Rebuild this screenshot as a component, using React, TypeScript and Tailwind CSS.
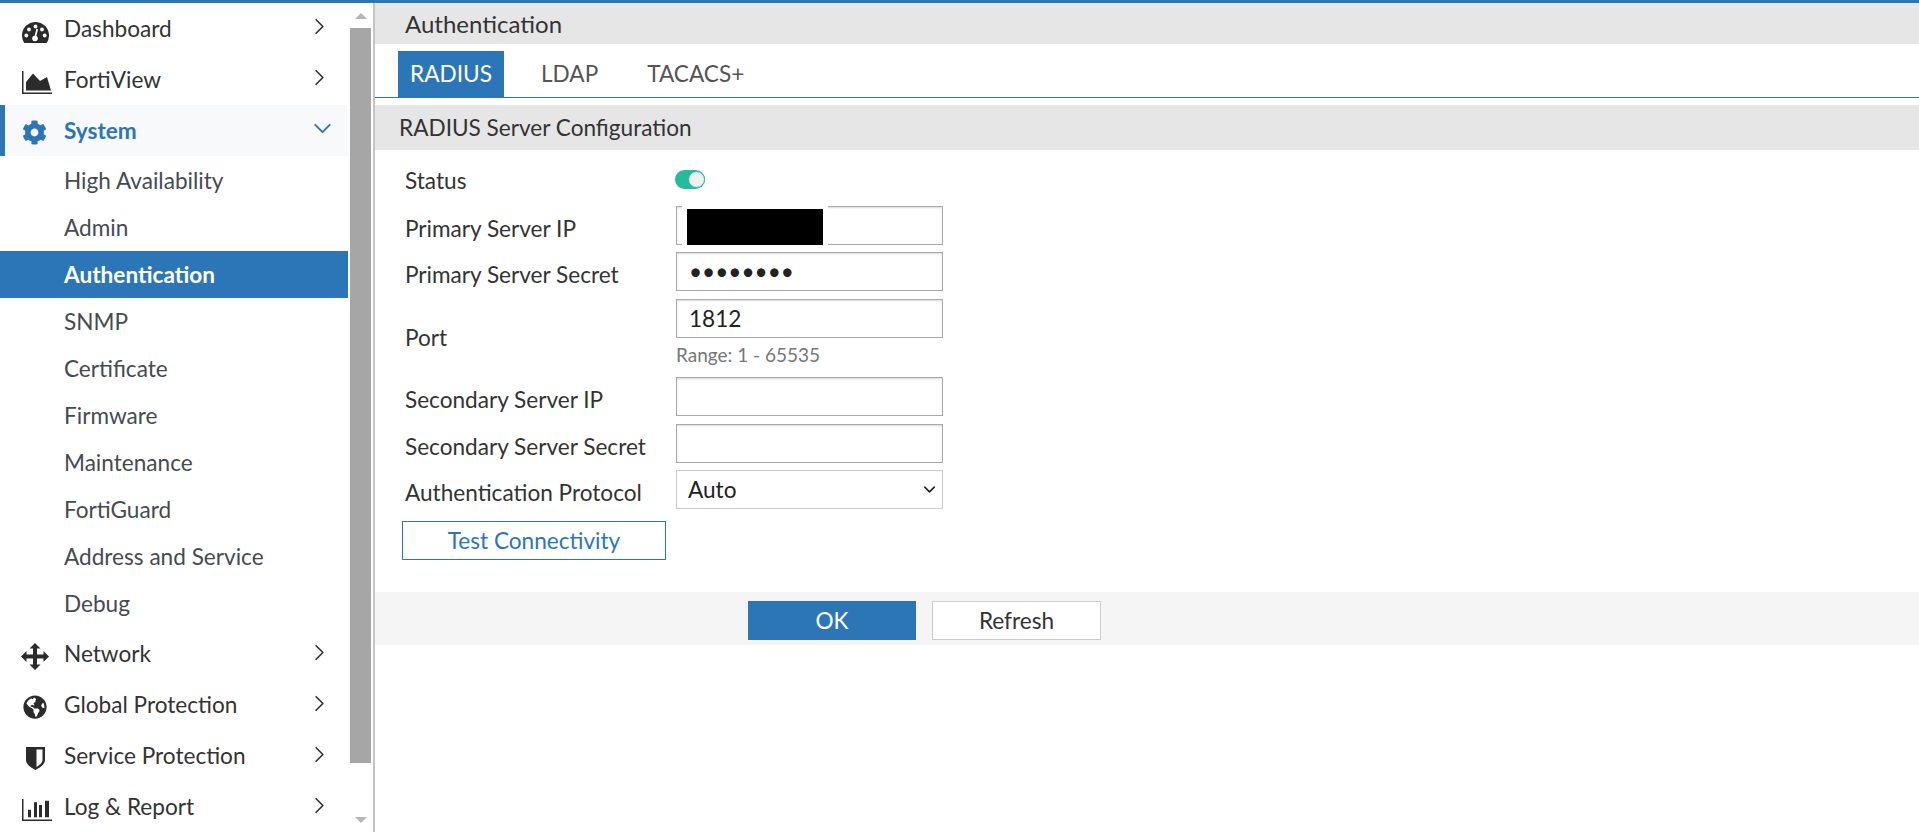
import { ChevronDown, ChevronRight } from 'lucide-react';
import { FaCog, FaGlobeAmericas } from 'react-icons/fa';
import type { ReactNode } from 'react';

const subItems = [
  'High Availability',
  'Admin',
  'Authentication',
  'SNMP',
  'Certificate',
  'Firmware',
  'Maintenance',
  'FortiGuard',
  'Address and Service',
  'Debug',
];

function DashboardIcon() {
  return (
    <svg viewBox="0 0 27 21" className="mt-[7px] h-[21px] w-[27px]">
      <path d="M2.3 21A13.5 13.5 0 1 1 24.7 21Z" fill="#2b2b2b" />
      <circle cx="13.5" cy="4.5" r="1.9" fill="white" />
      <circle cx="7" cy="7.5" r="1.9" fill="white" />
      <circle cx="20" cy="7.5" r="1.9" fill="white" />
      <circle cx="4.3" cy="13.5" r="1.9" fill="white" />
      <circle cx="22.7" cy="13.5" r="1.9" fill="white" />
      <circle cx="13" cy="16.5" r="2.8" fill="white" />
      <path d="M13 16L15.2 7" stroke="white" strokeWidth="1.7" />
    </svg>
  );
}

function AreaIcon() {
  return (
    <svg viewBox="0 0 30 23" className="mt-[5px] ml-[4px] h-[23px] w-[30px]">
      <path d="M0.75 0V22.25H30" fill="none" stroke="#2b2b2b" strokeWidth="1.5" />
      <path d="M4 19.5V11L11 2.5L18 10L25 6L29 19.5Z" fill="#2b2b2b" />
    </svg>
  );
}

function ArrowsIcon() {
  return (
    <svg viewBox="0 0 28 27" className="mt-[3px] h-[27px] w-[28px]">
      <path
        d="M14 0L19.5 5.5H16V11.5H22.5V8L28 13.5L22.5 19V15.5H16V21.5H19.5L14 27L8.5 21.5H12V15.5H5.5V19L0 13.5L5.5 8V11.5H12V5.5H8.5Z"
        fill="#2b2b2b"
      />
    </svg>
  );
}

function ShieldIcon() {
  return (
    <svg viewBox="0 0 19 23" className="mt-[3px] h-[23px] w-[19px]">
      <path d="M0 0H19V13C19 18 13 21 9.5 23C6 21 0 18 0 13Z" fill="#2b2b2b" />
      <path d="M10.5 2.5H16.5V13C16.5 16 13 18.5 10.5 20Z" fill="white" />
    </svg>
  );
}

function BarsIcon() {
  return (
    <svg viewBox="0 0 30 22" className="mt-[5px] ml-[4px] h-[22px] w-[30px]">
      <path d="M0.75 0V21.25H30" fill="none" stroke="#2b2b2b" strokeWidth="1.5" />
      <path d="M6 10.7H9V18.3H6ZM12 3.3H15V18.3H12ZM17 6H20V18.3H17ZM23 1.7H27V18.3H23Z" fill="#2b2b2b" />
    </svg>
  );
}

function TopItem({ icon, label, labelClass = 'pb-[1px]' }: { icon: ReactNode; label: string; labelClass?: string }) {
  return (
    <div className="relative flex h-[51px] items-center text-[#333]">
      <span className="flex w-[64px] shrink-0 justify-center pl-[6px] text-[#2b2b2b]">{icon}</span>
      <span className={`text-[22.6px] ${labelClass}`}>{label}</span>
      <ChevronRight className="absolute top-[10px] left-[306px] h-[27px] w-[27px] stroke-[1.5]" />
    </div>
  );
}

function Sidebar() {
  return (
    <div className="flex h-full w-[375px] shrink-0 border-r-2 border-[#c4c4c4]">
      <nav className="w-[348px] shrink-0">
        <TopItem icon={<DashboardIcon />} label="Dashboard" labelClass="pt-[1px]" />
        <TopItem icon={<AreaIcon />} label="FortiView" labelClass="pt-[1px]" />
        <div className="relative flex h-[51px] items-center border-l-[5px] border-[#2c76b8] bg-[#f8f9fa] font-bold text-[#2c76b8]">
          <span className="flex w-[59px] shrink-0 pl-[17px]"><FaCog size={25} className="mt-[4px]" /></span>
          <span className="text-[22.6px]">System</span>
          <ChevronDown className="absolute top-[9px] left-[303px] h-[29px] w-[29px] stroke-[1.6]" />
        </div>
        <div className="pt-[1px] pb-[2px]">
          {subItems.map((item) => (
            <div
              key={item}
              className={
                item === 'Authentication'
                  ? 'flex h-[47px] items-center bg-[#2c76b8] pl-[64px] text-[22.6px] font-bold text-white'
                  : 'flex h-[47px] items-center pl-[64px] text-[22.6px] text-[#454b52]'
              }
            >
              {item}
            </div>
          ))}
        </div>
        <TopItem icon={<ArrowsIcon />} label="Network" />
        <TopItem icon={<FaGlobeAmericas size={24} className="mt-[2px]" />} label="Global Protection" />
        <TopItem icon={<ShieldIcon />} label="Service Protection" />
        <TopItem icon={<BarsIcon />} label="Log & Report" />
      </nav>
      <div className="ml-[2px] flex w-[21px] shrink-0 flex-col items-center">
        <div className="mt-[10px] h-0 w-0 border-x-[6px] border-b-[6px] border-x-transparent border-b-[#b5b5b5]" />
        <div className="mt-[9px] h-[735px] w-full bg-[#a6a6a6]" />
        <div className="mt-[54px] h-0 w-0 border-x-[6px] border-t-[6px] border-x-transparent border-t-[#b5b5b5]" />
      </div>
    </div>
  );
}

const inputClass =
  'h-[39px] w-[267px] border border-[#aaaaaa] bg-white px-[12px] text-[22.6px] text-[#222] shadow-[inset_0_1px_2px_rgba(0,0,0,0.15)] outline-none';

function Row({ label, className, children }: { label: string; className: string; children: ReactNode }) {
  return (
    <div className={`flex items-center ${className}`}>
      <label className="w-[271px] shrink-0 pt-[6px] text-[22.6px] leading-[30px] text-[#333]">{label}</label>
      {children}
    </div>
  );
}

function Main() {
  return (
    <main className="flex-1">
      <div className="flex h-[41px] items-center bg-[#e6e6e6] pl-[30px] text-[24px] text-[#333]">Authentication</div>

      <div className="mt-[7px] flex h-[47px] items-stretch gap-[37px] border-b border-[#2c76b8] pl-[23px] text-[22.6px] text-[#555]">
        <div className="flex w-[106px] items-center justify-center bg-[#2c76b8] text-white">RADIUS</div>
        <div className="flex items-center">LDAP</div>
        <div className="ml-[12px] flex items-center">TACACS+</div>
      </div>

      <div className="mt-[7px] flex h-[45px] items-center bg-[#e6e6e6] pl-[24px] text-[22.6px] text-[#333]">
        RADIUS Server Configuration
      </div>

      <div className="pl-[30px]">
        <div className="mt-[16px] flex h-[32px] items-center">
          <span className="w-[270px] shrink-0 pb-[2px] text-[22.6px] leading-[30px] text-[#333]">Status</span>
          <span className="relative -mt-[5px] h-[19px] w-[30px] rounded-full bg-[#26bb9c]">
            <span className="absolute top-[1px] right-0 h-[17px] w-[17px] rounded-full border border-[#26bb9c] bg-[#f0f0f0]" />
          </span>
        </div>

        <Row label="Primary Server IP" className="mt-[8px]">
          <div className="relative">
            <input className={inputClass} readOnly />
            {/* Redacted value */}
            <div className="absolute top-0 bottom-0 left-[6px] w-[146px] bg-white">
              <div className="mt-[3px] ml-[5px] h-[36px] w-[136px] bg-black" />
            </div>
          </div>
        </Row>
        <Row label="Primary Server Secret" className="mt-[7px]">
          <input className={inputClass} type="password" defaultValue="12345678" />
        </Row>

        <div className="mt-[8px] flex items-start">
          <label className="w-[271px] shrink-0 pt-[24px] text-[22.6px] leading-[30px] text-[#333]">Port</label>
          <div className="flex flex-col">
            <input className={inputClass} defaultValue="1812" />
            <span className="mt-[6px] mb-[3px] text-[19px] leading-[22px] text-[#777]">Range: 1 - 65535</span>
          </div>
        </div>

        <Row label="Secondary Server IP" className="mt-[8px]">
          <input className={inputClass} />
        </Row>
        <Row label="Secondary Server Secret" className="mt-[8px]">
          <input className={inputClass} />
        </Row>
        <Row label="Authentication Protocol" className="mt-[7px]">
          <div className="relative">
            <select className="block h-[39px] w-[267px] appearance-none border border-[#cccccc] bg-white pl-[11px] text-[22.6px] text-[#222] outline-none">
              <option>Auto</option>
            </select>
            <ChevronDown className="pointer-events-none absolute top-[10px] right-[4px] h-[19px] w-[19px] stroke-[2] text-[#222]" />
          </div>
        </Row>

        <button className="mt-[12px] -ml-[3px] block h-[39px] w-[264px] border border-[#2c76b8] bg-white text-[22.6px] text-[#2c76b8]">
          Test Connectivity
        </button>
      </div>

      <div className="mt-[32px] flex h-[53px] items-start bg-[#f5f5f5] pt-[9px] pl-[373px]">
        <button className="h-[39px] w-[168px] bg-[#2c76b8] text-[22.6px] text-white">OK</button>
        <button className="ml-[16px] h-[39px] w-[169px] border border-[#cccccc] bg-white text-[22.6px] text-[#333]">Refresh</button>
      </div>
    </main>
  );
}

export default function App() {
  return (
    <div className="flex h-[832px] flex-col overflow-hidden bg-white font-['Lato',sans-serif]">
      <div className="h-[3px] shrink-0 bg-[#2c76b8]" />
      <div className="flex min-h-0 flex-1">
        <Sidebar />
        <Main />
      </div>
    </div>
  );
}
